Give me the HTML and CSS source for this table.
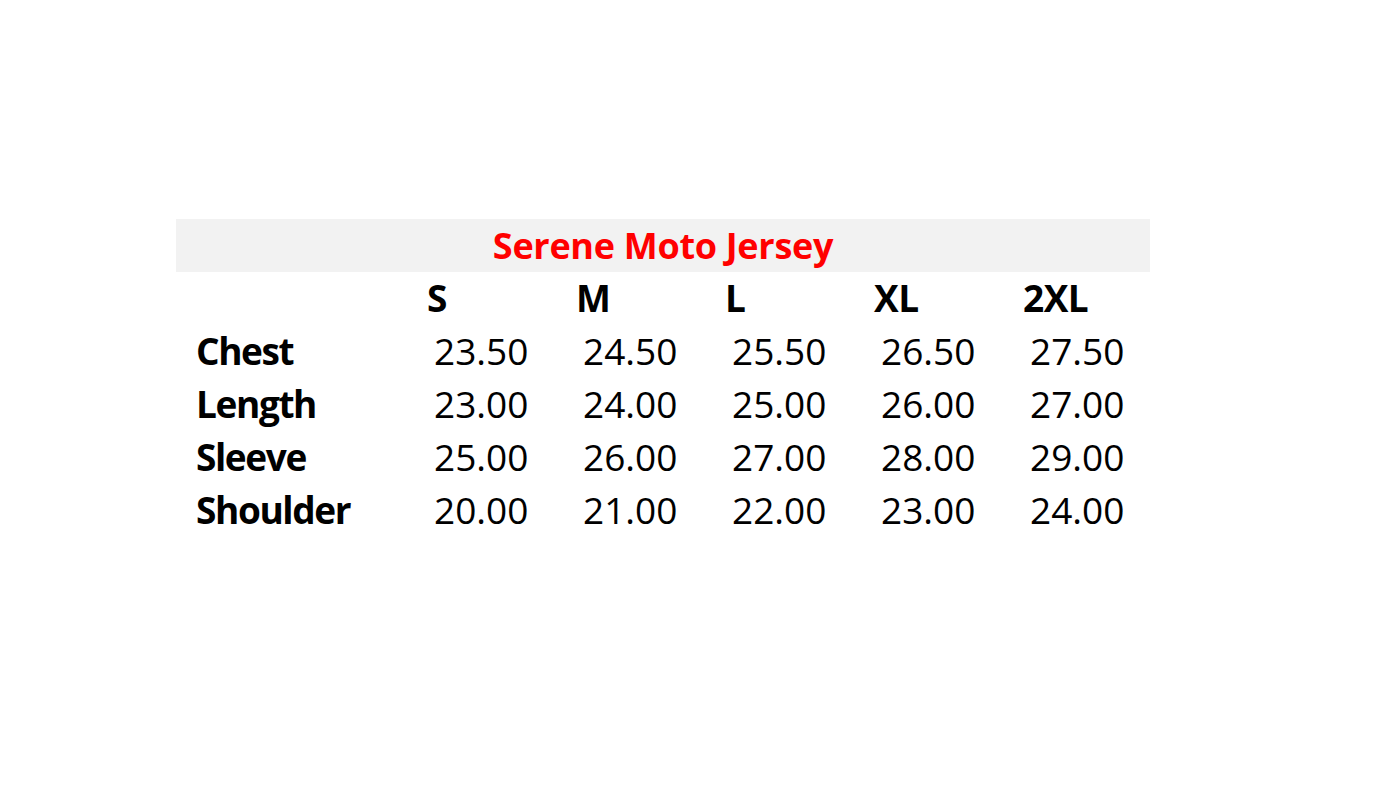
FILE: index.html
```html
<!DOCTYPE html>
<html>
<head>
<meta charset="utf-8">
<link rel="stylesheet" href="styles.css">
</head>
<body>
<div class="sheet">
  <div class="title-band"><span class="title">Serene Moto Jersey</span></div>
  <div class="grid">
    <div class="label"></div>
    <div class="size">S</div>
    <div class="size">M</div>
    <div class="size">L</div>
    <div class="size">XL</div>
    <div class="size">2XL</div>

    <div class="label">Chest</div>
    <div class="num">23.50</div>
    <div class="num">24.50</div>
    <div class="num">25.50</div>
    <div class="num">26.50</div>
    <div class="num">27.50</div>

    <div class="label">Length</div>
    <div class="num">23.00</div>
    <div class="num">24.00</div>
    <div class="num">25.00</div>
    <div class="num">26.00</div>
    <div class="num">27.00</div>

    <div class="label">Sleeve</div>
    <div class="num">25.00</div>
    <div class="num">26.00</div>
    <div class="num">27.00</div>
    <div class="num">28.00</div>
    <div class="num">29.00</div>

    <div class="label">Shoulder</div>
    <div class="num">20.00</div>
    <div class="num">21.00</div>
    <div class="num">22.00</div>
    <div class="num">23.00</div>
    <div class="num">24.00</div>
  </div>
</div>
</body>
</html>
```

FILE: styles.css
```css
html, body {
  margin: 0;
  padding: 0;
  background: #ffffff;
}
body {
  font-family: "Open Sans", "Liberation Sans", sans-serif;
  color: #000000;
}
.sheet {
  padding-top: 219px;
  padding-left: 176px;
}
.title-band {
  width: 974px;
  height: 53px;
  background: #f2f2f2;
  display: flex;
  align-items: center;
  justify-content: center;
}
.title {
  color: #ff0000;
  font-weight: 700;
  font-size: 36px;
  letter-spacing: -0.3px;
  line-height: 53px;
}
.grid {
  display: grid;
  grid-template-columns: 249px repeat(5, 149px);
  grid-auto-rows: 53px;
  line-height: 52px;
  font-size: 37px;
}
.label {
  font-weight: 700;
  padding-left: 20px;
  letter-spacing: -1.4px;
}
.size {
  font-weight: 700;
  padding-left: 2px;
  letter-spacing: -0.5px;
}
.num {
  padding-left: 9px;
  letter-spacing: 0;
}
```
